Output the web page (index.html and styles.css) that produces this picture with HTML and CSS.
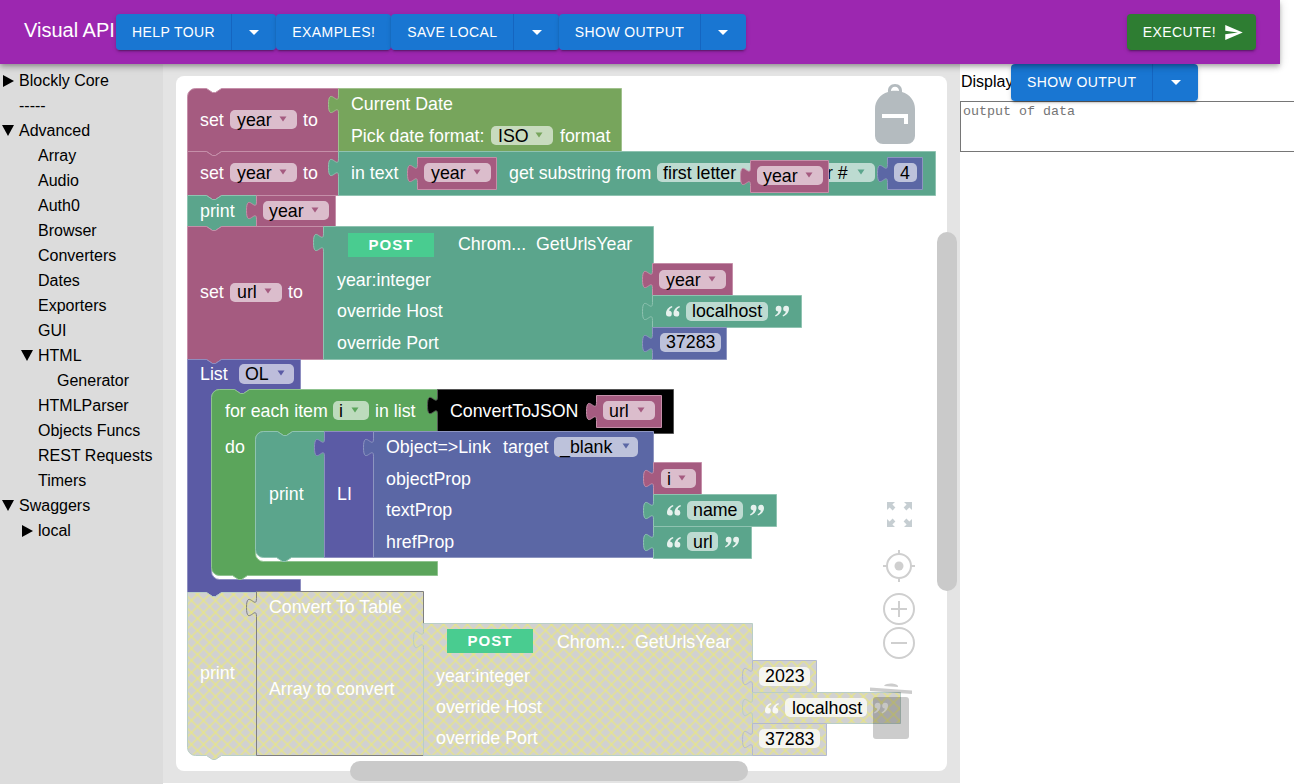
FILE: index.html
```html
<!DOCTYPE html>
<html>
 <head>
  <title>Visual API</title>
  <link rel="stylesheet" href="styles.css">
 </head>
 <body>
  <div class="appbar">
   <div class="title">Visual API</div>
   <div class="btn-group"><button class="btn">HELP TOUR</button><button class="btn drop"><span class="caret-down"></span></button></div>
   <div class="btn-group"><button class="btn">EXAMPLES!</button></div>
   <div class="btn-group"><button class="btn">SAVE LOCAL</button><button class="btn drop"><span class="caret-down"></span></button></div>
   <div class="btn-group"><button class="btn">SHOW OUTPUT</button><button class="btn drop"><span class="caret-down"></span></button></div>
   <div class="spacer"></div>
   <button class="btn execute">EXECUTE!
    <svg class="send" viewBox="2 3 21 18"><path d="M2.01 21 23 12 2.01 3 2 10l15 2-15 2z"/></svg>
   </button>
  </div>

  <div class="content">
   <!-- tree of block categories -->
   <div class="tree">
    <div class="row"><span class="slot"><span class="tri closed"></span></span>Blockly Core</div>
    <div class="row"><span class="slot"></span>-----</div>
    <div class="row"><span class="slot"><span class="tri open"></span></span>Advanced</div>
    <div class="row lvl1"><span class="slot"></span>Array</div>
    <div class="row lvl1"><span class="slot"></span>Audio</div>
    <div class="row lvl1"><span class="slot"></span>Auth0</div>
    <div class="row lvl1"><span class="slot"></span>Browser</div>
    <div class="row lvl1"><span class="slot"></span>Converters</div>
    <div class="row lvl1"><span class="slot"></span>Dates</div>
    <div class="row lvl1"><span class="slot"></span>Exporters</div>
    <div class="row lvl1"><span class="slot"></span>GUI</div>
    <div class="row lvl1"><span class="slot"><span class="tri open"></span></span>HTML</div>
    <div class="row lvl2"><span class="slot"></span>Generator</div>
    <div class="row lvl1"><span class="slot"></span>HTMLParser</div>
    <div class="row lvl1"><span class="slot"></span>Objects Funcs</div>
    <div class="row lvl1"><span class="slot"></span>REST Requests</div>
    <div class="row lvl1"><span class="slot"></span>Timers</div>
    <div class="row"><span class="slot"><span class="tri open"></span></span>Swaggers</div>
    <div class="row lvl1"><span class="slot"><span class="tri closed"></span></span>local</div>
   </div>

   <!-- workspace: the svg uses page coordinates through its viewBox -->
   <div class="workspace">
    <div class="card"></div>
    <svg class="blocks" viewBox="163 64 797 720">
     <defs>
      <pattern id="off" width="12" height="12" patternUnits="userSpaceOnUse">
       <rect width="12" height="12" fill="#d1d1d1"/>
       <path d="M-1 -1L13 13M13 -1L-1 13" stroke="#e7e586" stroke-width="1.3"/>
      </pattern>
      <path id="arr" d="M-3.5,-2.5h7l-3.5,5z"/>
      <g id="qo">
       <path d="M6,0C2.5,1 0,4 0,7.6a2.9,2.9 0 1 0 3.2,-2.8C3.2,3.4 4.4,2 6.4,1.2z"/>
       <path d="M13.5,0C10,1 7.5,4 7.5,7.6a2.9,2.9 0 1 0 3.2,-2.8C10.7,3.4 11.9,2 13.9,1.2z"/>
      </g>
      <g id="qc"><use href="#qo" transform="rotate(180 7 5.2)"/></g>
      <path id="fit" d="M0,0h8l-2.6,2.6 3,3-2.8,2.8-3,-3L0,8z"/>
     </defs>

     <!-- set year to / current date -->
     <path class="blk pink" d="M188,96a8,8 0 0 1 8,-8H207l6,4h3l6,-4H339V151H222l-6,4h-3l-6,-4H188z"/>
     <text class="t" x="200" y="126">set</text>
     <rect class="field" x="230" y="110" width="67" height="19" rx="5"/>
     <text class="f" x="237" y="126">year</text>
     <use class="a-pink" href="#arr" x="283" y="119"/>
     <text class="t" x="303" y="126">to</text>
     <path class="blk date" d="M339,88H622V151H339V113c0,-12 -10,10 -10,-9s10,3 10,-9z"/>
     <text class="t" x="351" y="110">Current Date</text>
     <text class="t" x="351" y="142">Pick date format:</text>
     <rect class="field" x="491" y="126" width="62" height="19" rx="5"/>
     <text class="f" x="498" y="142">ISO</text>
     <use class="a-date" href="#arr" x="539" y="135"/>
     <text class="t" x="560" y="142">format</text>

     <!-- set year to / substring -->
     <path class="blk pink" d="M188,151H207l6,4h3l6,-4H339V195H222l-6,4h-3l-6,-4H188z"/>
     <text class="t" x="200" y="179">set</text>
     <rect class="field" x="230" y="163" width="67" height="19" rx="5"/>
     <text class="f" x="237" y="179">year</text>
     <use class="a-pink" href="#arr" x="283" y="172"/>
     <text class="t" x="303" y="179">to</text>
     <path class="blk teal" d="M339,151H936V195H339V176c0,-12 -10,10 -10,-9s10,3 10,-9z"/>
     <text class="t" x="351" y="179">in text</text>
     <path class="blk pink" d="M418,157H497V189H418V182c0,-12 -10,10 -10,-9s10,3 10,-9z"/>
     <rect class="field" x="424" y="163" width="67" height="19" rx="5"/>
     <text class="f" x="431" y="179">year</text>
     <use class="a-pink" href="#arr" x="477" y="172"/>
     <text class="t" x="509" y="179">get substring from</text>
     <rect class="field" x="657" y="163" width="218" height="19" rx="5"/>
     <text class="f" x="663" y="179">first letter</text>
     <text class="f" x="827" y="179">r #</text>
     <use class="a-teal" href="#arr" x="861" y="172"/>
     <path class="blk pink" d="M751,160H829V192H751V185c0,-12 -10,10 -10,-9s10,3 10,-9z"/>
     <rect class="field" x="757" y="166" width="66" height="19" rx="5"/>
     <text class="f" x="763" y="182">year</text>
     <use class="a-pink" href="#arr" x="809" y="175"/>
     <path class="blk num" d="M888,157H923V189H888V182c0,-12 -10,10 -10,-9s10,3 10,-9z"/>
     <rect class="field" x="894" y="163" width="23" height="19" rx="5"/>
     <text class="f" x="900" y="179">4</text>

     <!-- print year -->
     <path class="blk teal" d="M188,195H207l6,4h3l6,-4H257V226H222l-6,4h-3l-6,-4H188z"/>
     <text class="t" x="200" y="217">print</text>
     <path class="blk pink" d="M257,195H336V226H257V219c0,-12 -10,10 -10,-9s10,3 10,-9z"/>
     <rect class="field" x="263" y="201" width="66" height="19" rx="5"/>
     <text class="f" x="269" y="217">year</text>
     <use class="a-pink" href="#arr" x="315" y="210"/>

     <!-- set url to -->
     <path class="blk pink" d="M188,226H207l6,4h3l6,-4H324V359H222l-6,4h-3l-6,-4H188z"/>
     <text class="t" x="200" y="298">set</text>
     <rect class="field" x="230" y="283" width="52" height="19" rx="5"/>
     <text class="f" x="237" y="298">url</text>
     <use class="a-pink" href="#arr" x="268" y="291"/>
     <text class="t" x="288" y="298">to</text>
     <path class="blk teal" d="M324,226H654V359H324V251c0,-12 -10,10 -10,-9s10,3 10,-9z"/>
     <rect class="post" x="348" y="233" width="86" height="24"/>
     <text class="post-t" x="391" y="250">POST</text>
     <text class="t" x="458" y="250">Chrom...</text>
     <text class="t" x="536" y="250">GetUrlsYear</text>
     <text class="t" x="337" y="286">year:integer</text>
     <text class="t" x="337" y="317">override Host</text>
     <text class="t" x="337" y="349">override Port</text>
     <path class="blk pink" d="M653,263H733V295H653V288c0,-12 -10,10 -10,-9s10,3 10,-9z"/>
     <rect class="field" x="659" y="270" width="67" height="19" rx="5"/>
     <text class="f" x="666" y="286">year</text>
     <use class="a-pink" href="#arr" x="712" y="279"/>
     <path class="blk teal" d="M653,295H802V327H653V320c0,-12 -10,10 -10,-9s10,3 10,-9z"/>
     <use class="q" href="#qo" x="666" y="306"/>
     <rect class="field" x="686" y="302" width="82" height="19" rx="5"/>
     <text class="f" x="692" y="317">localhost</text>
     <use class="q" href="#qc" x="775" y="306"/>
     <path class="blk num" d="M653,327H727V359H653V352c0,-12 -10,10 -10,-9s10,3 10,-9z"/>
     <rect class="field" x="660" y="333" width="61" height="19" rx="5"/>
     <text class="f" x="666" y="348">37283</text>

     <!-- list -->
     <path class="blk list" d="M188,359H207l6,4h3l6,-4H301V389H250l-6,4h-3l-6,-4H220a8,8 0 0 0 -8,8V571a8,8 0 0 0 8,8H301V592H222l-6,4h-3l-6,-4H188z"/>
     <text class="t" x="200" y="380">List</text>
     <rect class="field" x="239" y="364" width="55" height="20" rx="5"/>
     <text class="f" x="245" y="380">OL</text>
     <use class="a-list" href="#arr" x="281" y="373"/>

     <!-- for each -->
     <path class="blk loop" d="M212,397a8,8 0 0 1 8,-8H235l6,4h3l6,-4H438V431H293l-6,4h-3l-6,-4H264a8,8 0 0 0 -8,8V553a8,8 0 0 0 8,8H438V575H248l-6,4h-3l-6,-4H220a8,8 0 0 1 -8,-8z"/>
     <text class="t" x="225" y="417">for each item</text>
     <rect class="field" x="333" y="401" width="36" height="19" rx="5"/>
     <text class="f" x="339" y="417">i</text>
     <use class="a-loop" href="#arr" x="355" y="410"/>
     <text class="t" x="375" y="417">in list</text>
     <text class="t" x="225" y="453">do</text>
     <path class="blk black" d="M438,389H674V433H438V414c0,-12 -10,10 -10,-9s10,3 10,-9z"/>
     <text class="t" x="450" y="417">ConvertToJSON</text>
     <path class="blk pink" d="M597,395H662V427H597V420c0,-12 -10,10 -10,-9s10,3 10,-9z"/>
     <rect class="field" x="603" y="401" width="52" height="19" rx="5"/>
     <text class="f" x="609" y="417">url</text>
     <use class="a-pink" href="#arr" x="641" y="410"/>

     <!-- print li -->
     <path class="blk teal" d="M256,439a8,8 0 0 1 8,-8H278l6,4h3l6,-4H325V557H292l-6,4h-3l-6,-4H264a8,8 0 0 1 -8,-8z"/>
     <text class="t" x="269" y="500">print</text>
     <path class="blk list" d="M325,431H374V557H325V456c0,-12 -10,10 -10,-9s10,3 10,-9z"/>
     <text class="t" x="337" y="500">LI</text>
     <path class="blk num" d="M374,431H654V557H374V456c0,-12 -10,10 -10,-9s10,3 10,-9z"/>
     <text class="t" x="386" y="453">Object=&gt;Link</text>
     <text class="t" x="503" y="453">target</text>
     <rect class="field" x="554" y="437" width="84" height="20" rx="5"/>
     <text class="f" x="560" y="453">_blank</text>
     <use class="a-num" href="#arr" x="626" y="446"/>
     <text class="t" x="386" y="485">objectProp</text>
     <text class="t" x="386" y="516">textProp</text>
     <text class="t" x="386" y="548">hrefProp</text>
     <path class="blk pink" d="M654,462H702V494H654V487c0,-12 -10,10 -10,-9s10,3 10,-9z"/>
     <rect class="field" x="661" y="469" width="35" height="19" rx="5"/>
     <text class="f" x="667" y="485">i</text>
     <use class="a-pink" href="#arr" x="682" y="478"/>
     <path class="blk teal" d="M654,494H777V526H654V519c0,-12 -10,10 -10,-9s10,3 10,-9z"/>
     <use class="q" href="#qo" x="667" y="505"/>
     <rect class="field" x="687" y="501" width="56" height="19" rx="5"/>
     <text class="f" x="693" y="516">name</text>
     <use class="q" href="#qc" x="750" y="505"/>
     <path class="blk teal" d="M654,526H752V558H654V551c0,-12 -10,10 -10,-9s10,3 10,-9z"/>
     <use class="q" href="#qo" x="667" y="537"/>
     <rect class="field" x="687" y="532" width="31" height="19" rx="5"/>
     <text class="f" x="693" y="548">url</text>
     <use class="q" href="#qc" x="725" y="537"/>

     <!-- disabled print / convert to table -->
     <path class="blk off-teal" fill="url(#off)" d="M188,592H207l6,4h3l6,-4H257V755H222l-6,4h-3l-6,-4H196a8,8 0 0 1 -8,-8z"/>
     <text class="t" x="200" y="679">print</text>
     <path class="blk off-sel" fill="url(#off)" d="M257,591H424V755H257V616c0,-12 -10,10 -10,-9s10,3 10,-9z"/>
     <text class="t" x="269" y="613">Convert To Table</text>
     <text class="t" x="269" y="695">Array to convert</text>
     <path class="blk off-teal" fill="url(#off)" d="M424,623H753V755H424V648c0,-12 -10,10 -10,-9s10,3 10,-9z"/>
     <rect class="post" x="447" y="629" width="86" height="24"/>
     <text class="post-t" x="490" y="646">POST</text>
     <text class="t" x="557" y="648">Chrom...</text>
     <text class="t" x="635" y="648">GetUrlsYear</text>
     <text class="t" x="436" y="682">year:integer</text>
     <text class="t" x="436" y="713">override Host</text>
     <text class="t" x="436" y="744">override Port</text>
     <path class="blk off-num" fill="url(#off)" d="M753,660H817V692H753V685c0,-12 -10,10 -10,-9s10,3 10,-9z"/>
     <rect class="field-off" x="759" y="667" width="51" height="19" rx="5"/>
     <text class="f" x="765" y="682">2023</text>
     <path class="blk off-teal" fill="url(#off)" d="M753,692H901V723H753V716c0,-12 -10,10 -10,-9s10,3 10,-9z"/>
     <use class="q" href="#qo" x="765" y="703"/>
     <rect class="field-off" x="785" y="698" width="82" height="19" rx="5"/>
     <text class="f" x="792" y="714">localhost</text>
     <use class="q" href="#qc" x="874" y="703"/>
     <path class="blk off-num" fill="url(#off)" d="M753,723H827V755H753V748c0,-12 -10,10 -10,-9s10,3 10,-9z"/>
     <rect class="field-off" x="759" y="729" width="61" height="19" rx="5"/>
     <text class="f" x="765" y="745">37283</text>

     <!-- backpack -->
     <path class="pack" fill-rule="evenodd" d="M888,92C887.500,87 890.500,84 895,84S902.500,87 902,92C910,94.500 915,101 915,109V136a8,8 0 0 1 -8,8H883a8,8 0 0 1 -8,-8V109C875,101 880,94.500 888,92ZM891,91C893.500,90.600 896.500,90.600 899,91C899,88.500 897.500,86.800 895,86.800S891,88.500 891,91ZM882,114V118H904V124H908V114Z"/>

     <!-- workspace controls -->
     <g class="fit-icon">
      <use href="#fit" transform="translate(887 502)"/>
      <use href="#fit" transform="translate(912 502) scale(-1 1)"/>
      <use href="#fit" transform="translate(887 527) scale(1 -1)"/>
      <use href="#fit" transform="translate(912 527) scale(-1 -1)"/>
     </g>
     <circle class="ctl" cx="899" cy="566" r="12"/>
     <circle class="ctl-dot" cx="899" cy="566" r="4.500"/>
     <path class="ctl" d="M899,550v5M899,577v5M883,566h5M910,566h5"/>
     <circle class="ctl" cx="899" cy="609" r="15"/>
     <path class="ctl" d="M891,609h16M899,601v16"/>
     <circle class="ctl" cx="899" cy="643" r="15"/>
     <path class="ctl" d="M891,643h16"/>

     <!-- trash sits over the blocks -->
     <g class="trash">
      <rect x="873" y="697" width="36" height="42" rx="3"/>
      <path d="M870,687.500L912,690.500V694L870,691ZM884,686a7,3 0 0 1 14,1z"/>
     </g>

     <rect class="scroll" x="937" y="232" width="20" height="359" rx="10"/>
     <rect class="scroll" x="350" y="761" width="398" height="20" rx="10"/>
    </svg>
   </div>

   <div class="output">
    <div class="output-head">
     <span class="display-label">Display</span>
     <div class="btn-group"><button class="btn">SHOW OUTPUT</button><button class="btn drop"><span class="caret-down"></span></button></div>
    </div>
    <textarea class="output-text" placeholder="output of data"></textarea>
   </div>
  </div>
 </body>
</html>
```

FILE: styles.css
```css
html, body {
 margin: 0;
 height: 100%;
 overflow: hidden;
 background-color: #fff;
 font-family: "Liberation Sans", Arial, sans-serif;
}

/* barra superior */
.appbar {
 position: relative;
 z-index: 2;
 display: flex;
 align-items: center;
 height: 64px;
 padding-right: 24px;
 box-sizing: border-box;
 width: 1280px;
 background-color: #9c27b0;
 box-shadow: 0 2px 4px -1px rgba(0, 0, 0, 0.2), 0 4px 5px rgba(0, 0, 0, 0.14), 0 1px 10px rgba(0, 0, 0, 0.12);
}
.title {
 width: 116px;
 flex: none;
 padding: 0 0 4px 24px;
 box-sizing: border-box;
 color: #fff;
 font-size: 20px;
 white-space: nowrap;
}
.spacer {
 flex: 1;
}
.btn-group {
 display: flex;
 border-radius: 4px;
 box-shadow: 0 3px 1px -2px rgba(0, 0, 0, 0.2), 0 2px 2px rgba(0, 0, 0, 0.14), 0 1px 5px rgba(0, 0, 0, 0.12);
}
.btn {
 display: flex;
 align-items: center;
 padding: 6px 16px;
 border: none;
 border-radius: 4px;
 background-color: #1976d2;
 color: #fff;
 font-family: "Liberation Sans", Arial, sans-serif;
 font-size: 14px;
 line-height: 24.5px;
 letter-spacing: 0.4px;
 white-space: nowrap;
}
.btn-group .btn:first-child:not(:last-child) {
 border-radius: 4px 0 0 4px;
 border-right: 1px solid #1565c0;
}
.btn.drop {
 justify-content: center;
 width: 44.4px;
 padding: 6px 0;
 border-radius: 0 4px 4px 0;
}
.caret-down {
 width: 0;
 height: 0;
 border-left: 5px solid transparent;
 border-right: 5px solid transparent;
 border-top: 5px solid #fff;
}
.execute {
 background-color: #2e7d32;
 box-shadow: 0 3px 1px -2px rgba(0, 0, 0, 0.2), 0 2px 2px rgba(0, 0, 0, 0.14), 0 1px 5px rgba(0, 0, 0, 0.12);
}
.send {
 width: 18px;
 height: 15px;
 margin: 0 -3px 0 9px;
 fill: #fff;
}

/* contenido */
.content {
 display: flex;
 height: 720px;
}

/* arbol de categorias */
.tree {
 width: 163px;
 flex: none;
 padding-top: 4px;
 box-sizing: border-box;
 background-color: #dcdcdc;
 font-size: 16px;
}
.row {
 display: flex;
 align-items: center;
 height: 25px;
 color: #000;
 white-space: nowrap;
}
.row.lvl1 {
 padding-left: 19px;
}
.row.lvl2 {
 padding-left: 38px;
}
.slot {
 display: flex;
 align-items: center;
 width: 19px;
 flex: none;
 padding-left: 2px;
 box-sizing: border-box;
}
.tri {
 width: 0;
 height: 0;
}
.tri.closed {
 margin-left: 1px;
 border-top: 6px solid transparent;
 border-bottom: 6px solid transparent;
 border-left: 11px solid #000;
}
.tri.open {
 border-left: 6px solid transparent;
 border-right: 6px solid transparent;
 border-top: 11px solid #000;
}

/* area de bloques */
.workspace {
 position: relative;
 display: flex;
 width: 797px;
 height: 719px;
 flex: none;
 padding: 12px 13px;
 box-sizing: border-box;
 background-color: #e4e4e4;
}
.card {
 flex: 1;
 border-radius: 8px;
 background-color: #fff;
}
.blocks {
 position: absolute;
 left: 0;
 top: 0;
 width: 797px;
 height: 720px;
 font-family: "Liberation Sans", Arial, sans-serif;
 font-size: 17.8px;
}
.blk {
 stroke-width: 1px;
 transform: translate(-0.5px, 0.5px);
}
.pink { fill: #a55b80; stroke: #c58fa9; }
.date { fill: #77a55c; stroke: #a0c18d; }
.teal { fill: #5ba58c; stroke: #8fc3b1; }
.num { fill: #5b67a5; stroke: #8d95c0; }
.list { fill: #5b5ba5; stroke: #8d8dc0; }
.loop { fill: #5ba55b; stroke: #8fc38f; }
.black { fill: #000; stroke: #555; }
.off-teal { stroke: #b9cec6; }
.off-sel { stroke: #7f7f7f; }
.off-num { stroke: #b3b9d0; }

.a-pink { fill: #a55b80; }
.a-date { fill: #77a55c; }
.a-teal { fill: #5ba58c; }
.a-num { fill: #5b67a5; }
.a-list { fill: #5b5ba5; }
.a-loop { fill: #5ba55b; }

.t { fill: #fff; }
.f { fill: #000; }
.q { fill: #fff; opacity: 0.85; }
.field { fill: #fff; fill-opacity: 0.6; }
.field-off { fill: #fff; fill-opacity: 0.75; }
.post { fill: #49cc90; }
.post-t {
 fill: #fff;
 font-size: 15px;
 font-weight: bold;
 letter-spacing: 1px;
 text-anchor: middle;
}

.pack { fill: #b4bbbf; }
.fit-icon { fill: #c6ced2; }
.ctl {
 fill: none;
 stroke: #cfcfcf;
 stroke-width: 2px;
}
.ctl-dot { fill: #cfcfcf; }
.trash { fill: #000; fill-opacity: 0.2; }
.scroll { fill: #cacaca; }

/* panel de salida */
.output {
 flex: 1;
 min-width: 0;
 overflow: hidden;
}
.output-head {
 display: flex;
 align-items: center;
}
.display-label {
 width: 50px;
 flex: none;
 margin-left: 1px;
 font-size: 16px;
 color: #000;
 white-space: nowrap;
}
.output-text {
 display: block;
 width: 360px;
 height: 51px;
 margin: 0;
 padding: 2px;
 box-sizing: border-box;
 border: 1px solid #767676;
 font-family: "Liberation Mono", monospace;
 font-size: 13.33px;
 resize: none;
}
```
